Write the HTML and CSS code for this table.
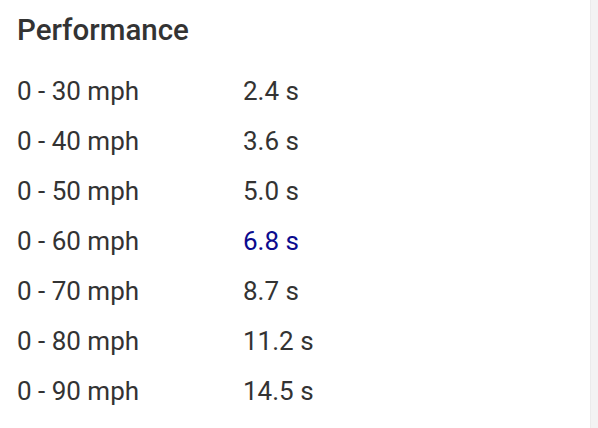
FILE: index.html
```html
<!DOCTYPE html>
<html>
<head>
<meta charset="utf-8">
<link rel="stylesheet" href="styles.css">
</head>
<body>
<div class="page">
  <section class="panel">
    <h2 class="title">Performance</h2>
    <div class="stats">
      <div class="label">0 - 30 mph</div><div class="value">2.4 s</div>
      <div class="label">0 - 40 mph</div><div class="value">3.6 s</div>
      <div class="label">0 - 50 mph</div><div class="value">5.0 s</div>
      <div class="label">0 - 60 mph</div><div class="value highlight">6.8 s</div>
      <div class="label">0 - 70 mph</div><div class="value">8.7 s</div>
      <div class="label">0 - 80 mph</div><div class="value">11.2 s</div>
      <div class="label">0 - 90 mph</div><div class="value">14.5 s</div>
    </div>
  </section>
  <div class="edge"></div>
</div>
</body>
</html>
```
FILE: styles.css
```css
html, body {
  margin: 0;
  padding: 0;
  background: #fff;
}
body {
  font-family: Roboto, "Liberation Sans", sans-serif;
  color: #333;
}
.page {
  display: flex;
  width: 598px;
  height: 428px;
  overflow: hidden;
}
.panel {
  flex: 1;
  padding: 12px 0 0 17px;
}
.edge {
  width: 7px;
  background: #f3f3f3;
  border-left: 1px solid #ebebeb;
}
.title {
  margin: 0;
  font-size: 29.5px;
  font-weight: 500;
  line-height: 36px;
  color: #333;
}
.stats {
  display: grid;
  grid-template-columns: 226px auto;
  grid-auto-rows: 50px;
  margin-top: 18px;
  font-size: 26px;
  line-height: 50px;
}
.highlight {
  color: #0b0b8e;
}
```
